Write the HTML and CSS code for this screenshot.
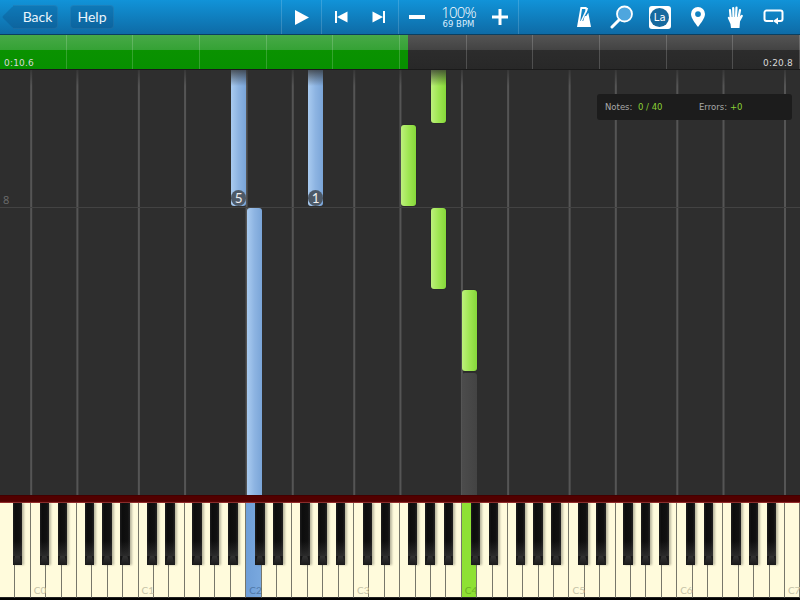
FILE: index.html
```html
<!DOCTYPE html>
<html lang="en">
<head>
<meta charset="utf-8">
<title>Synthesia</title>
<link rel="stylesheet" href="styles.css">
</head>
<body>
<div class="app">
  <header class="toolbar">
    <div class="nav">
      <button class="btn back">Back</button>
      <button class="btn help">Help</button>
    </div>
    <div class="group play">
      <svg width="16" height="17" viewBox="0 0 16 17"><path class="ic" d="M1 1 15 8.500 1 16Z"/></svg>
    </div>
    <div class="group skip">
      <svg width="13" height="12" viewBox="0 0 13 12"><path class="ic" d="M0 0h2v12H0ZM12.500 .5v11L2 6Z"/></svg>
      <svg width="13" height="12" viewBox="0 0 13 12"><path class="ic" d="M13 0h-2v12h2ZM.5 .5v11L11 6Z"/></svg>
    </div>
    <div class="group tempo">
      <svg width="16" height="4" viewBox="0 0 16 4"><path class="ic" d="M0 0h16v4H0Z"/></svg>
      <div class="speed"><span class="pct">100%</span><span class="bpm">69 BPM</span></div>
      <svg width="16" height="16" viewBox="0 0 16 16"><path class="ic" d="M6.500 0h3v6.500H16v3H9.500V16h-3V9.500H0v-3h6.500Z"/></svg>
    </div>
    <div class="tools">
      <div class="tool"><svg width="16" height="22" viewBox="0 0 16 22"><path class="ic" fill-rule="evenodd" d="M4.500 1h6l.9 3.600-2.900 5.600 2-.4 1.800-3L15 21H1ZM6 3 4.200 15h3l2.700-9L9.300 3Z"/><path class="stk" d="M4.500 17 11.500 2"/></svg></div>
      <div class="tool"><svg width="24" height="24" viewBox="0 0 24 24"><circle cx="14.500" cy="9" r="7.500" fill="#4ea6de" stroke="#fff" stroke-width="1.800"/><path d="M9 15 2 22" stroke="#fff" stroke-width="3" stroke-linecap="round"/></svg></div>
      <div class="tool"><div class="la"><span>La</span></div></div>
      <div class="tool"><svg width="16" height="22" viewBox="0 0 16 22"><path class="ic" fill-rule="evenodd" d="M8 1a7 7 0 0 1 7 7c0 4-4 9-7 13C5 17 1 12 1 8a7 7 0 0 1 7-7Zm0 4.200a2.900 2.900 0 1 0 0 5.800 2.900 2.900 0 0 0 0-5.800Z"/></svg></div>
      <div class="tool"><svg width="17" height="23" viewBox="0 0 17 23"><path class="ic" d="M4 22 3.500 18 1 12.500c-.8-1.700 1-2.500 2-1L4 13V11h8.500l1-1.500c1.200-1.600 3 -.6 2.200 1L13 15.500 12.500 22Z"/><path d="M3.800 13 3 4M6.500 12 6.200 2M9 12 9.500 1.500M11.500 12 13 4" stroke="#fff" stroke-width="2.200" stroke-linecap="round"/></svg></div>
      <div class="tool"><svg width="21" height="16" viewBox="0 0 21 16"><path d="M10 12H3.500A2 2 0 0 1 1.500 10V3.500a2 2 0 0 1 2-2h14a2 2 0 0 1 2 2V10a2 2 0 0 1-2 2H14" fill="none" stroke="#fff" stroke-width="2"/><path class="ic" d="M15 8.500v7L10 12Z"/></svg></div>
    </div>
  </header>

  <section class="timeline">
    <div class="progress"></div>
    <div class="ticks"><span></span><span></span><span></span><span></span><span></span><span></span><span></span><span></span><span></span><span></span><span></span><span></span></div>
    <div class="times"><span>0:10.6</span><span>0:20.8</span></div>
  </section>

  <main class="roll">
    <div class="measure"><span>8</span></div>
    <div class="note blue n1"><span class="finger">5</span></div>
    <div class="note blue n2"><span class="finger">1</span></div>
    <div class="note blue n3"></div>
    <div class="note green n4"></div>
    <div class="note green n5"></div>
    <div class="note green n6"></div>
    <div class="note green n7"></div>
    <div class="note grey n8"></div>
    <div class="stats">
      <span class="stat-a">Notes:</span><span class="val val-a">0 / 40</span>
      <span class="stat-b">Errors:</span><span class="val">+0</span>
    </div>
  </main>

  <div class="redbar"></div>
  <div class="piano">
    <div class="k"><div class="b as"></div></div><div class="k"></div>
    <div class="k"><div class="b cs"></div><span>C0</span></div><div class="k"><div class="b ds"></div></div><div class="k"></div><div class="k"><div class="b fs"></div></div><div class="k"><div class="b gs"></div></div><div class="k"><div class="b as"></div></div><div class="k"></div>
    <div class="k"><div class="b cs"></div><span>C1</span></div><div class="k"><div class="b ds"></div></div><div class="k"></div><div class="k"><div class="b fs"></div></div><div class="k"><div class="b gs"></div></div><div class="k"><div class="b as"></div></div><div class="k"></div>
    <div class="k on-blue"><div class="b cs"></div><span>C2</span></div><div class="k"><div class="b ds"></div></div><div class="k"></div><div class="k"><div class="b fs"></div></div><div class="k"><div class="b gs"></div></div><div class="k"><div class="b as"></div></div><div class="k"></div>
    <div class="k"><div class="b cs"></div><span>C3</span></div><div class="k"><div class="b ds"></div></div><div class="k"></div><div class="k"><div class="b fs"></div></div><div class="k"><div class="b gs"></div></div><div class="k"><div class="b as"></div></div><div class="k"></div>
    <div class="k on-green"><div class="b cs"></div><span>C4</span></div><div class="k"><div class="b ds"></div></div><div class="k"></div><div class="k"><div class="b fs"></div></div><div class="k"><div class="b gs"></div></div><div class="k"><div class="b as"></div></div><div class="k"></div>
    <div class="k"><div class="b cs"></div><span>C5</span></div><div class="k"><div class="b ds"></div></div><div class="k"></div><div class="k"><div class="b fs"></div></div><div class="k"><div class="b gs"></div></div><div class="k"><div class="b as"></div></div><div class="k"></div>
    <div class="k"><div class="b cs"></div><span>C6</span></div><div class="k"><div class="b ds"></div></div><div class="k"></div><div class="k"><div class="b fs"></div></div><div class="k"><div class="b gs"></div></div><div class="k"><div class="b as"></div></div><div class="k"></div>
    <div class="k"><span>C7</span></div>
  </div>
</div>
</body>
</html>
```
FILE: styles.css
```css
* { box-sizing: border-box; }
html, body { margin: 0; height: 100%; background: #2e2e2e; }
.app { width: 800px; height: 600px; display: flex; flex-direction: column; overflow: hidden; font-family: "DejaVu Sans", sans-serif; }

/* toolbar */
.toolbar { height: 35px; display: flex; background: linear-gradient(#1193d8, #0e6ba6); border-bottom: 1px solid #0b3f60; color: #fff; }
.nav { width: 281px; display: flex; align-items: center; padding: 5px 0 6px 13px; gap: 12px; }
.btn { height: 24px; border: 1px solid rgba(255,255,255,.06); border-radius: 4px; background: rgba(10,60,110,.24); color: #eaf5fc; font: 14px "Lato", sans-serif; padding: 0; }
.back { position: relative; width: 45px; padding-left: 5px; border-left: 0; border-radius: 0 4px 4px 0; }
.back::before { content: ""; position: absolute; left: -8px; top: 3px; width: 16px; height: 16px; background: rgba(10,60,110,.24); transform: rotate(45deg); clip-path: polygon(0 0, 0 100%, 100% 100%); border-radius: 2px; }
.help { width: 44px; }
.group { height: 34px; display: flex; align-items: center; border-left: 1px solid rgba(255,255,255,.16); }
.play { width: 40px; padding-left: 12px; }
.skip { width: 77px; padding-left: 13px; gap: 24px; }
.tempo { width: 120px; padding: 0 10px; justify-content: space-between; }
.speed { display: flex; flex-direction: column; align-items: center; }
.pct { font: 300 15px "Open Sans", sans-serif; line-height: 13px; letter-spacing: -.8px; }
.bpm { font: 8.500px "DejaVu Sans", sans-serif; line-height: 10px; color: #dcefff; }
.tools { flex: 1; display: flex; justify-content: flex-end; padding-right: 8px; border-left: 1px solid rgba(255,255,255,.16); }
.tool { width: 37.800px; height: 34px; display: flex; align-items: center; justify-content: center; }
.ic { fill: #fff; }
.stk { stroke: #fff; stroke-width: 1.500; }
.la { width: 22px; height: 23px; border-radius: 3px; background: #fff; display: flex; align-items: center; justify-content: center; }
.la span { width: 19px; height: 19px; border-radius: 50%; background: #176a9f; color: #fff; font: 10px/19px "DejaVu Sans", sans-serif; text-align: center; }

/* timeline */
.timeline { position: relative; height: 35px; flex: none; display: flex; align-items: flex-end; background: linear-gradient(#545454, #434343 44%, #2c2c2c 44%, #282828); border-bottom: 1px solid #1a1a1a; }
.progress { position: absolute; left: 0; top: 0; bottom: 0; width: 408px; background: linear-gradient(#47a947, #35a235 44%, #0a9200 44%, #079000); }
.ticks { position: absolute; inset: 0; display: flex; }
.ticks span { flex: 1; border-right: 1px solid rgba(255,255,255,.18); }
.times { position: relative; flex: 1; display: flex; justify-content: space-between; padding: 0 7px 0 4px; font-size: 9px; line-height: 11px; color: #d8d8d8; letter-spacing: .2px; }

/* note roll */
.roll { position: relative; flex: 1; background-color: #2e2e2e; background-image: linear-gradient(90deg, #555 1.500px, transparent 1.500px), linear-gradient(90deg, #555 1.500px, transparent 1.500px); background-size: 107.692px 100%; background-position: 30.200px 0, 76.400px 0; overflow: hidden; }
.roll::after { content: ""; position: absolute; left: 0; right: 0; top: 0; height: 16px; background: linear-gradient(rgba(46,46,46,.75), rgba(46,46,46,0)); }
.measure { position: absolute; left: 0; right: 0; top: 137px; height: 1px; background: #434343; }
.measure span { position: absolute; left: 3px; top: -14px; font: 11px/13px "Open Sans", sans-serif; color: #6d6d6d; }
.note { position: absolute; width: 15.400px; border-radius: 3px; }
.blue { background: linear-gradient(90deg, #a9cbf0, #8db4e2 50%, #7aa5d8); }
.green { background: linear-gradient(90deg, #bdf07c, #9fe652 50%, #86d83a); box-shadow: 0 0 1px #111; }
.grey { background: linear-gradient(90deg, #4c4c4c, #434343); border-radius: 3px 3px 0 0; }
.n1 { left: 231px; top: -4px; height: 140px; }
.n2 { left: 308px; top: -4px; height: 140px; }
.n3 { left: 246.600px; top: 138px; height: 290px; }
.n4 { left: 400.600px; top: 55px; height: 81px; }
.n5 { left: 431px; top: -4px; height: 57px; }
.n6 { left: 431px; top: 138px; height: 81px; }
.n7 { left: 462px; top: 220px; height: 81px; }
.n8 { left: 462px; top: 303px; height: 125px; }
.finger { position: absolute; left: 0; bottom: 0; width: 15.400px; height: 16px; border-radius: 50%; background: #4d5967; color: #eee; font: 13.500px/16px "Lato", sans-serif; text-align: center; }
.stats { position: absolute; left: 597px; top: 24px; width: 195px; height: 26px; display: flex; align-items: center; padding-left: 8px; background: #1c1c1c; border-radius: 3px; font-size: 8.500px; color: #a8a8a8; }
.stat-a { width: 33px; }
.val { color: #8ad135; }
.val-a { width: 61px; }
.stat-b { width: 31px; }

/* piano */
.redbar { height: 8px; flex: none; background: linear-gradient(#3a0000, #520000 15%, #520000 80%, #b04040); }
.piano { height: 97px; flex: none; display: flex; background: #000; padding-bottom: 2px; }
.k { position: relative; flex: 1; background: #fffbdc; border-right: 1.500px solid #77776a; border-bottom: 1px solid #222; }
.k span { position: absolute; left: 3px; bottom: 1px; font: 10px/11px "Lato", sans-serif; color: #c6c3a8; }
.on-blue { background: linear-gradient(90deg, #6f9fd8, #79a8de); }
.on-blue span { color: #4f78a8; }
.on-green { background: #8ee134; }
.on-green span { color: #6cb026; }
.b { position: absolute; z-index: 1; top: 0; left: 100%; width: 9.500px; height: 62px; margin-left: var(--off); background: linear-gradient(90deg, #1c1c1c, #0d0d0d 25%, #111 75%, #222); box-shadow: 2px 0 2px rgba(60,60,50,.35); }
.b::after { content: ""; position: absolute; left: 0; right: 0; bottom: 0; height: 9px; background: linear-gradient(#333, #1a1a1a); clip-path: polygon(25% 0, 75% 0, 100% 100%, 0 100%); }
.b::before { content: ""; position: absolute; left: 0; right: 0; top: 38px; height: 15px; background: linear-gradient(rgba(60,60,60,0), rgba(70,70,70,.5)); }
.cs { --off: -5.600px; }
.ds { --off: -3px; }
.fs { --off: -6.600px; }
.gs { --off: -4.500px; }
.as { --off: -1.800px; }
```
